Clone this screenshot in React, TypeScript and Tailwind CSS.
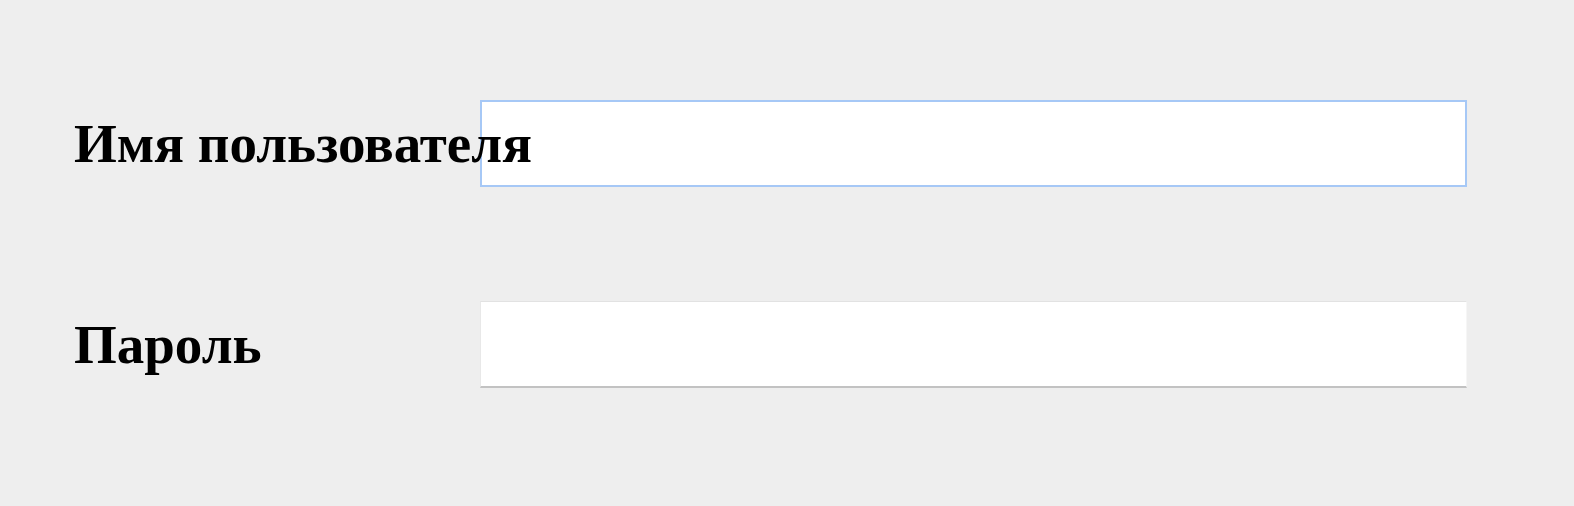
import React from "react";

const App: React.FC = () => {
  return (
    <div className="min-h-screen w-full bg-[#eeeeee] pl-[74px] pr-[107px] pt-[100px] font-['Liberation_Serif',serif]">
      <form className="flex flex-col gap-[114px]">
        <div className="flex items-center">
          <label className="relative z-10 w-[406px] shrink-0 whitespace-nowrap text-[55px] font-bold leading-none text-black">
            Имя пользователя
          </label>
          <input
            type="text"
            className="h-[87px] flex-1 border-2 border-[#a6c8f6] bg-white outline-none"
          />
        </div>
        <div className="flex items-center">
          <label className="relative z-10 w-[406px] shrink-0 whitespace-nowrap text-[55px] font-bold leading-none text-black">
            Пароль
          </label>
          <input
            type="password"
            className="h-[87px] flex-1 border border-b-2 border-t-[#e2e2e2] border-l-[#e8e8e8] border-r-[#f6f6f6] border-b-[#c2c2c2] bg-white outline-none"
          />
        </div>
      </form>
    </div>
  );
};

export default App;
